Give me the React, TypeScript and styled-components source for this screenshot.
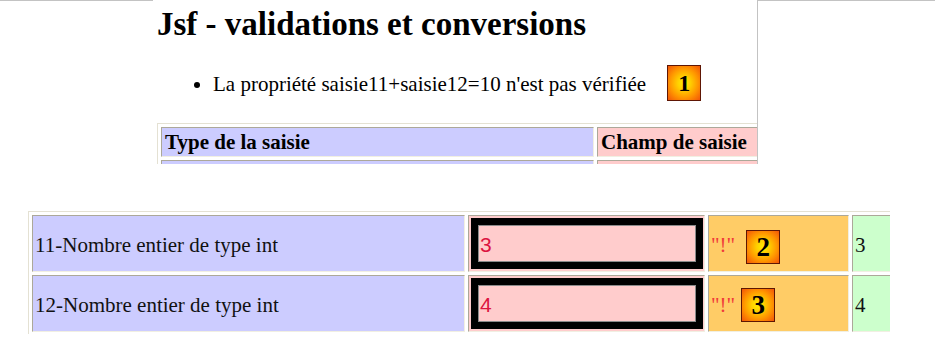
import React from "react";
import styled, { createGlobalStyle } from "styled-components";

const GlobalStyle = createGlobalStyle`
  html, body { margin: 0; padding: 0; background: #fff; }
  body {
    font-family: "Liberation Serif", "Times New Roman", serif;
    color: #000;
  }
  * { box-sizing: border-box; }
`;

const Page = styled.div`
  width: 935px;
  height: 349px;
  overflow: hidden;
  background: #fff;
`;

const TopBand = styled.div`
  display: flex;
  align-items: flex-start;
`;

const Rule = styled.div<{ $width?: number }>`
  flex: ${(p) => (p.$width ? `0 0 ${p.$width}px` : "1 1 auto")};
  border-top: 1px solid #c3c3c3;
`;

const TopShot = styled.section`
  flex: 0 0 605px;
  height: 164px;
  overflow: hidden;
  background: #fff;
  border-right: 1px solid #c3c3c3;
`;

const BottomShot = styled.section`
  width: 862px;
  height: 123px;
  margin: 47px 0 0 28px;
  overflow: hidden;
  background: #fff;
`;

const Title = styled.h1`
  margin: 0;
  padding: 5px 0 0 4px;
  font-size: 33px;
  line-height: 38px;
  font-weight: bold;
  white-space: nowrap;
`;

const Notes = styled.ul`
  margin: 22px 0 0;
  padding: 0 0 0 60px;
  font-size: 21px;
  line-height: 24px;
`;

const Note = styled.li`
  list-style: disc;
  white-space: nowrap;
`;

const Badge = styled.span<{ $w: number; $h: number; $fs: number; $dx?: number; $dy?: number }>`
  display: inline-block;
  position: relative;
  top: ${(p) => p.$dy ?? 0}px;
  width: ${(p) => p.$w}px;
  height: ${(p) => p.$h}px;
  margin-left: ${(p) => p.$dx ?? 0}px;
  line-height: ${(p) => p.$h - 2}px;
  border: 1px solid #5e1604;
  background: radial-gradient(
    ellipse at 50% 50%,
    #ffee00 0%,
    #ffcf00 28%,
    #ff9600 62%,
    #f25408 100%
  );
  font-family: "Liberation Serif", "Times New Roman", serif;
  font-weight: bold;
  font-size: ${(p) => p.$fs}px;
  text-align: center;
  color: #000;
  flex: none;
`;

const Grid = styled.table`
  border-collapse: separate;
  border-spacing: 3px;
  border: 1px solid #e4e1d3;
  font-size: 21px;
  line-height: 24px;
`;

const HeadCell = styled.th<{ $bg: string; $w: number }>`
  width: ${(p) => p.$w}px;
  min-width: ${(p) => p.$w}px;
  height: 29px;
  padding: 2px 3px;
  background: ${(p) => p.$bg};
  border: 1px solid;
  border-color: #aca899 #f1efe2 #f1efe2 #aca899;
  text-align: left;
  font-weight: bold;
  white-space: nowrap;
  vertical-align: middle;
`;

const Cell = styled.td<{ $bg: string; $w: number; $tight?: boolean }>`
  width: ${(p) => p.$w}px;
  min-width: ${(p) => p.$w}px;
  max-width: ${(p) => p.$w}px;
  height: 57px;
  padding: ${(p) => (p.$tight ? "2px 1px 2px 2px" : "4px 2px 1px")};
  background: ${(p) => p.$bg};
  border: 1px solid;
  border-color: #aca899 #f1efe2 #f1efe2 #aca899;
  white-space: nowrap;
  vertical-align: middle;
  color: #111;
`;

const Field = styled.input`
  display: block;
  width: 232px;
  height: 51px;
  margin: 0;
  padding: 2px 0 0 2px;
  border: 7px solid #000;
  box-shadow: inset 0 0 0 1px #8a8a8a;
  background: #ffcccc;
  font-family: "Liberation Sans", Arial, sans-serif;
  font-size: 21px;
  color: #dc1440;
  outline: none;
`;

const Flag = styled.div`
  display: flex;
  align-items: center;
`;

const Bang = styled.span`
  color: #f03a3a;
`;

const LAV = "#ccccff";
const PINK = "#ffcccc";
const ORANGE = "#ffcc66";
const GREEN = "#ccffcc";

const rows = [
  { label: "11-Nombre entier de type int", value: "3", badge: "2", dx: 11, dy: 2 },
  { label: "12-Nombre entier de type int", value: "4", badge: "3", dx: 6, dy: 0 },
];

export default function App() {
  return (
    <Page>
      <GlobalStyle />
      <TopBand>
        <Rule $width={153} />
        <TopShot>
          <Title>Jsf - validations et conversions</Title>
          <Notes>
            <Note>
              La propriété saisie11+saisie12=10 n'est pas vérifiée
              <Badge $w={34} $h={36} $fs={24} $dx={21}>
                1
              </Badge>
            </Note>
          </Notes>
          <Grid style={{ marginTop: 22, marginLeft: 4 }}>
            <tbody>
              <tr>
                <HeadCell $bg={LAV} $w={433}>Type de la saisie</HeadCell>
                <HeadCell $bg={PINK} $w={220}>Champ de saisie</HeadCell>
              </tr>
              <tr>
                <HeadCell $bg={LAV} $w={433}>&nbsp;</HeadCell>
                <HeadCell $bg={PINK} $w={220}>&nbsp;</HeadCell>
              </tr>
            </tbody>
          </Grid>
        </TopShot>
        <Rule />
      </TopBand>
      <BottomShot>
        <Grid>
          <tbody>
            {rows.map((r) => (
              <tr key={r.label}>
                <Cell $bg={LAV} $w={433}>{r.label}</Cell>
                <Cell $bg={PINK} $w={237} $tight>
                  <Field readOnly value={r.value} />
                </Cell>
                <Cell $bg={ORANGE} $w={141}>
                  <Flag>
                    <Bang>"!"</Bang>
                    <Badge $w={34} $h={34} $fs={27} $dx={r.dx} $dy={r.dy}>
                      {r.badge}
                    </Badge>
                  </Flag>
                </Cell>
                <Cell $bg={GREEN} $w={80}>{r.value}</Cell>
              </tr>
            ))}
          </tbody>
        </Grid>
      </BottomShot>
    </Page>
  );
}
